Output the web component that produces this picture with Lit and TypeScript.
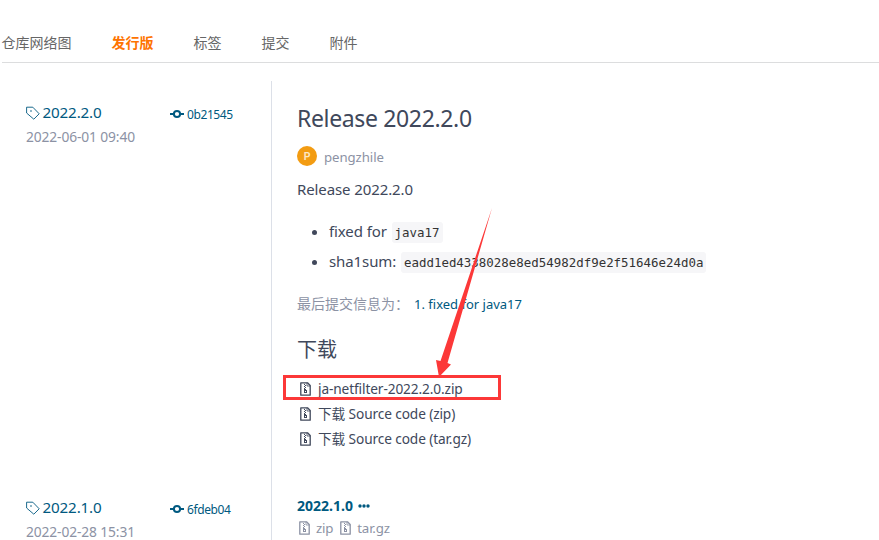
import { LitElement, html, css, svg } from "lit";
import { customElement } from "lit/decorators.js";

const tagIcon = svg`<path d="M.6 1.2h6.2l6.4 6.6-5.4 5.4L.6 7z" fill="none" stroke="currentColor" stroke-width=".9"/><circle cx="5" cy="5" r=".8" fill="currentColor"/>`;
const commitIcon = svg`<path d="M0 5h4M10 5h4" stroke="currentColor" stroke-width="2"/><circle cx="7" cy="5" r="3.1" fill="none" stroke="currentColor" stroke-width="2"/>`;
const zipIcon = svg`<path d="M.8.8h6.7l2.7 2.7v9.7H.8z" fill="none" stroke="currentColor" stroke-width="1.3" stroke-linejoin="round"/><path d="M7 .8v3.2h3.2" fill="none" stroke="currentColor" stroke-width=".8"/><path d="M4 2h1v1H4zM5 3h1v1H5zM4 4h1v1H4zM5 5h1v1H5zM4 6h1v1H4z" fill="currentColor"/><path d="M4 7h2v1h1v3H4z" fill="currentColor"/><path d="M5 9h1v1H5z" fill="#fff"/>`;

@customElement("app-root")
export class AppRoot extends LitElement {
  static styles = css`
    :host { display: block; position: relative; width: 879px; height: 540px; overflow: hidden; background: #fff; color: #40485b; font: 14px/20px "Noto Sans", "Noto Sans CJK SC", sans-serif; }
    * { box-sizing: border-box; white-space: nowrap; }
    svg { display: block; flex: none; }
    nav { display: flex; gap: 40px; margin-left: 1.5px; padding-top: 32px; height: 62px; font: 14px/20px "Noto Sans CJK SC", sans-serif; color: #666; }
    nav b { color: #fe7300; }
    .rule { height: 1px; margin-left: 2px; background: #dcddde; }
    .releases { display: grid; grid-template-columns: 271px 1fr; margin-top: 18px; }
    .side { color: #005980; padding: 20px 0 0 26px; }
    .line { display: flex; align-items: center; height: 22px; }
    .line .tag { margin-top: 2px; }
    .version { font-size: 15.2px; margin-left: 2.5px; width: 127px; letter-spacing: -.15px; }
    .hash { font-size: 12px; letter-spacing: -.4px; margin: 5px 0 0 3.5px; }
    .line .commit { margin-top: 3px; }
    .date { color: #8c92a4; margin-top: 4px; font-size: 13.8px; letter-spacing: -.12px; }
    .main { border-left: 1px solid #dce0e8; padding-left: 25px; height: 395px; }
    h1 { font-weight: 400; font-size: 23px; line-height: 32px; letter-spacing: -.35px; margin: 21px 0 0; }
    .user { display: flex; align-items: center; gap: 7px; margin-top: 11px; color: #8c92a4; font-size: 13.2px; letter-spacing: -.05px; }
    .user span + span { padding-top: 2px; }
    .avatar { width: 20px; height: 20px; border-radius: 50%; background: #f39c12; color: #fde8c4; font: 700 10px/22px "Liberation Sans", sans-serif; text-align: center; }
    p { margin: 11px 0 0; font-size: 15px; line-height: 22px; letter-spacing: -.1px; }
    ul { margin: 16px 0 0; padding: 0 0 0 32px; font-size: 15px; line-height: 30px; letter-spacing: -.1px; }
    li { height: 30px; }
    code { font: 12.45px/20px "DejaVu Sans Mono", monospace; letter-spacing: 0; background: #f6f6f8; border-radius: 3px; padding: 3px; margin-left: 1px; color: #333; }
    .last { display: flex; gap: 5px; color: #8c92a4; margin-top: 18px; font-size: 14px; }
    .last a { color: #005980; font-size: 13px; letter-spacing: 0; }
    h2 { font: 20px/30px "Noto Sans CJK SC", sans-serif; margin: 20px 0 12px; }
    .file { display: flex; align-items: center; height: 25px; padding-left: 3px; gap: 7px; font-size: 13.7px; letter-spacing: -.12px; }
    .file:first-of-type span { letter-spacing: -.2px; }
    .older { height: 64px; padding-top: 20px; }
    .title { display: flex; align-items: center; gap: 5px; font-weight: 700; color: #005980; font-size: 14px; letter-spacing: 0; }
    .archives { display: flex; align-items: center; color: #8c92a4; gap: 6px; margin-top: 2px; padding-left: 2px; font-size: 13.3px; letter-spacing: -.2px; }
    .archives span + svg { margin-left: 1px; }
    .arrow { position: absolute; left: 0; top: 0; }
  `;

  side(v: string, hash: string, date: string) {
    return html`<div class="side">
      <div class="line"><svg class="tag" width="14" height="14">${tagIcon}</svg><span class="version">${v}</span><svg class="commit" width="14" height="10">${commitIcon}</svg><span class="hash">${hash}</span></div>
      <div class="date">${date}</div></div>`;
  }
  zip() { return html`<svg width="11" height="14">${zipIcon}</svg>`; }
  render() {
    return html`
      <nav><span>仓库网络图</span><b>发行版</b><span>标签</span><span>提交</span><span>附件</span></nav>
      <div class="rule"></div>
      <div class="releases">
        ${this.side("2022.2.0", "0b21545", "2022-06-01 09:40")}
        <div class="main">
          <h1>Release 2022.2.0</h1>
          <div class="user"><span class="avatar">P</span><span>pengzhile</span></div>
          <p>Release 2022.2.0</p>
          <ul><li>fixed for <code>java17</code></li><li>sha1sum: <code>eadd1ed4338028e8ed54982df9e2f51646e24d0a</code></li></ul>
          <div class="last"><span>最后提交信息为：</span><a>1. fixed for java17</a></div>
          <h2>下载</h2>
          ${["ja-netfilter-2022.2.0.zip", "下载 Source code (zip)", "下载 Source code (tar.gz)"].map((f) => html`<div class="file">${this.zip()}<span>${f}</span></div>`)}
        </div>
        ${this.side("2022.1.0", "6fdeb04", "2022-02-28 15:31")}
        <div class="main older">
          <div class="title"><span>2022.1.0</span><svg width="12" height="4" fill="currentColor"><circle cx="2" cy="2" r="1.7"/><circle cx="6" cy="2" r="1.7"/><circle cx="10" cy="2" r="1.7"/></svg></div>
          <div class="archives">${this.zip()}<span>zip</span>${this.zip()}<span>tar.gz</span></div>
        </div>
      </div>
      <svg class="arrow" width="879" height="540"><rect x="284.5" y="376.5" width="215" height="22" fill="none" stroke="#fc3838" stroke-width="3"/><path d="M492 208L447.500 363L451 364.500L439 377L436 360L440.500 361z" fill="#fc3838"/></svg>`;
  }
}
